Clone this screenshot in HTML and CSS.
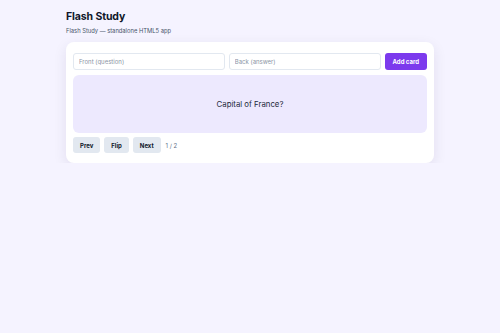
FILE: index.html
```html
<!DOCTYPE html>
<html lang="en">

<head>
    <meta charset="UTF-8">
    <meta name="viewport" content="width=device-width, initial-scale=1.0">
    <title>Flash Study</title>
    <link rel="stylesheet" href="styles.css">
</head>

<body>
    <div class="wrap">
        <h1>Flash Study</h1>
        <p class="sub">Flash Study — standalone HTML5 app</p>

        <div class="panel">
            <form class="add-row" onsubmit="return false">
                <input type="text" placeholder="Front (question)">
                <input type="text" placeholder="Back (answer)">
                <button type="submit" class="primary">Add card</button>
            </form>
            <div class="card">Capital of France?</div>
            <div class="controls">
                <button>Prev</button>
                <button>Flip</button>
                <button>Next</button>
                <span class="count">1 / 2</span>
            </div>
        </div>
    </div>
</body>

</html>
```

FILE: styles.css
```css
html,
body {
    margin: 0;
}

body {
    background: #f5f3ff;
    color: #1e293b;
    font-family: Inter, "Noto Sans", sans-serif;
}

.wrap {
    width: 368px;
    margin: 0 auto;
    padding-top: 10px;
}

h1 {
    margin: 0;
    font-size: 10.5px;
    font-weight: 700;
    line-height: 14px;
    color: #0f172a;
    letter-spacing: -0.1px;
}

.sub {
    margin: 2px 0 0;
    font-size: 5.8px;
    line-height: 9px;
    color: #475569;
}

.panel {
    margin-top: 7px;
    background: #fff;
    border-radius: 8px;
    padding: 11px 7px 10px;
    box-shadow: 0 4px 14px rgba(30, 27, 75, 0.09);
}

.add-row {
    display: flex;
    gap: 4px;
    margin: 0;
}

.add-row input {
    flex: 1;
    min-width: 0;
    height: 17px;
    box-sizing: border-box;
    border: 1px solid #e2e8f0;
    border-radius: 3px;
    padding: 0 5px;
    font: 6px Inter, "Noto Sans", sans-serif;
    color: #1e293b;
    outline: 0;
}

.add-row input::placeholder {
    color: #8b95a5;
}

button {
    border: none;
    border-radius: 3px;
    background: #e2e8f0;
    color: #0f172a;
    font: 700 6px Inter, "Noto Sans", sans-serif;
    height: 16px;
    padding: 0 7px;
    cursor: pointer;
}

.primary {
    background: #7c3aed;
    color: #fff;
    height: 17px;
    padding: 0 8px;
}

.card {
    margin-top: 5px;
    height: 58px;
    background: #ede9fe;
    border-radius: 6px;
    display: flex;
    align-items: center;
    justify-content: center;
    font-size: 7.8px;
    color: #1e293b;
}

.controls {
    margin-top: 4px;
    display: flex;
    align-items: center;
    gap: 4px;
}

.count {
    margin-left: 1px;
    font-size: 6px;
    color: #64748b;
}
```
